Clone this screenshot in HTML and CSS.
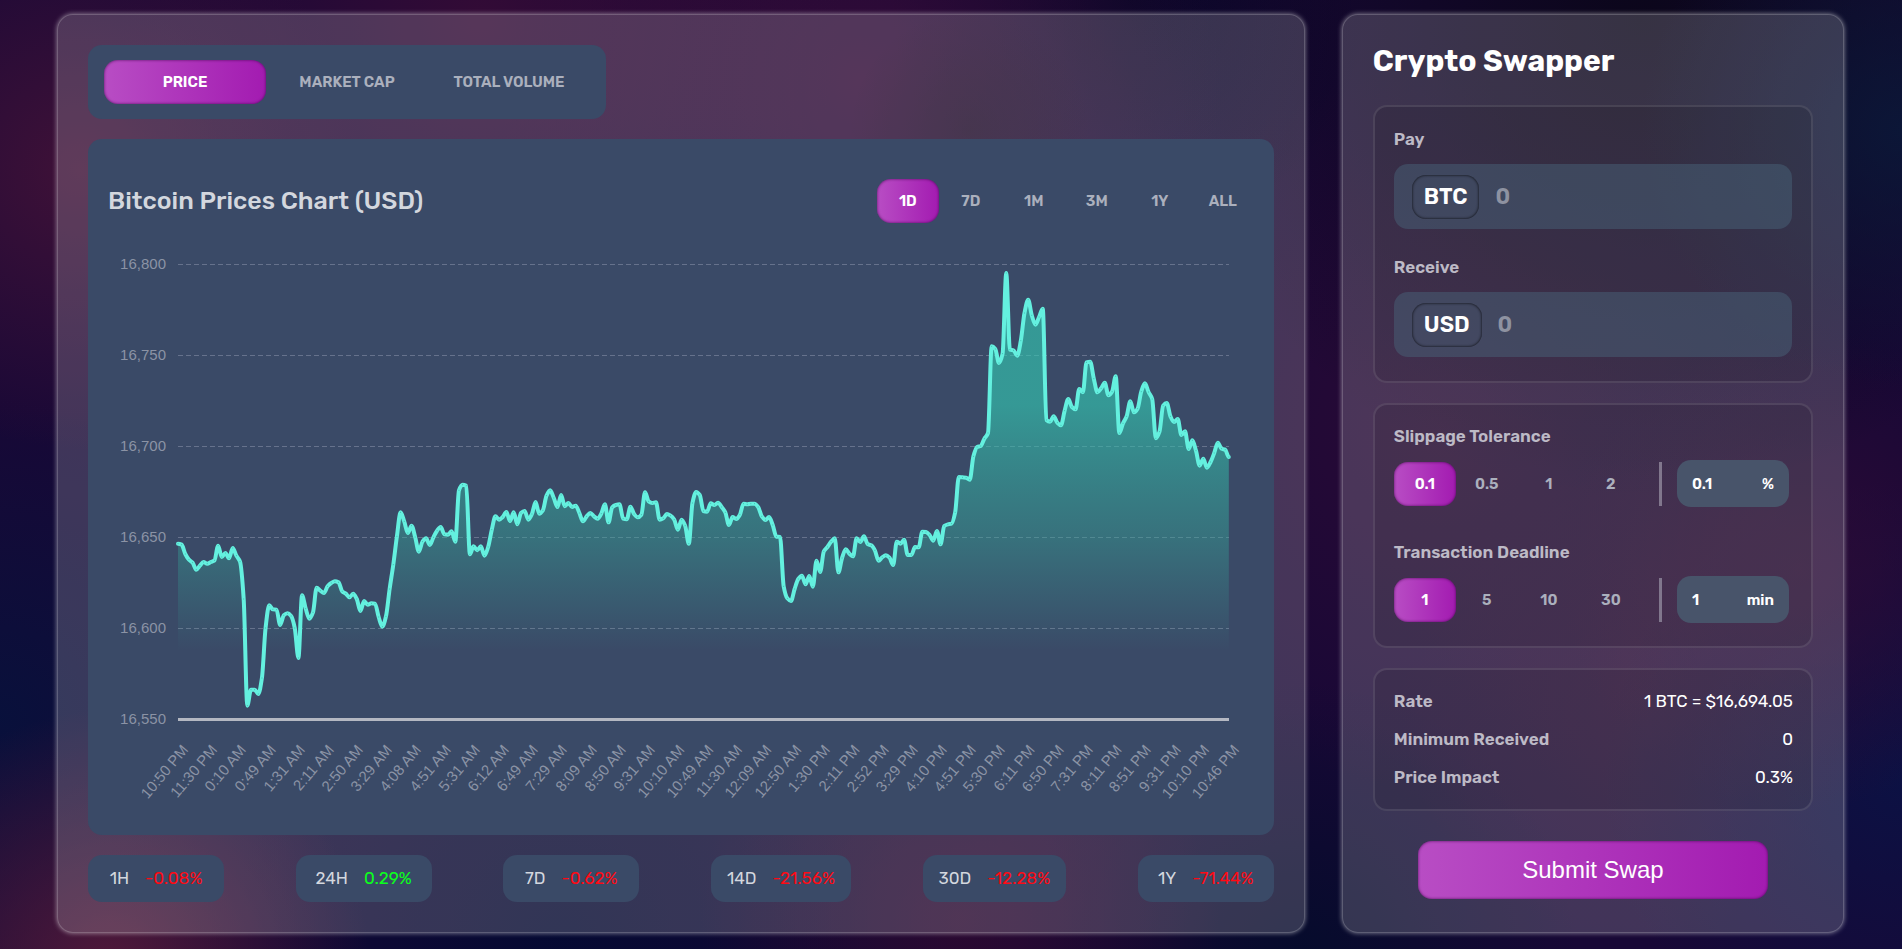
FILE: index.html
```
<!DOCTYPE html>
<html lang="en">
<head>
<meta charset="utf-8">
<title>Crypto Swapper</title>
<link rel="stylesheet" href="styles.css">
</head>
<body>
<main class="layout">
  <section class="panel market">
    <nav class="tabs" aria-label="Metric">
      <button class="btn tab active" type="button">PRICE</button>
      <button class="btn tab" type="button">MARKET CAP</button>
      <button class="btn tab" type="button">TOTAL VOLUME</button>
    </nav>

    <article class="chart">
      <header class="chart-head">
        <h2 class="chart-title">Bitcoin Prices Chart (USD)</h2>
        <div class="ranges">
          <button class="btn range active" type="button">1D</button>
          <button class="btn range" type="button">7D</button>
          <button class="btn range" type="button">1M</button>
          <button class="btn range" type="button">3M</button>
          <button class="btn range" type="button">1Y</button>
          <button class="btn range" type="button">ALL</button>
        </div>
      </header>
      <div class="chart-body">
        <div class="y-axis">
          <span>16,800</span><span>16,750</span><span>16,700</span><span>16,650</span><span>16,600</span><span>16,550</span>
        </div>
        <svg class="plot" viewBox="0 0 3154 1365" preserveAspectRatio="none" role="img" aria-label="Bitcoin price, last 24 hours">
          <defs>
            <linearGradient id="fade" gradientUnits="userSpaceOnUse" x1="0" y1="0" x2="0" y2="1365">
              <stop offset="0.31" stop-color="#32c9b2" stop-opacity="0.62"/>
              <stop offset="0.6" stop-color="#34a89a" stop-opacity="0.42"/>
              <stop offset="0.85" stop-color="#34a89a" stop-opacity="0"/>
            </linearGradient>
          </defs>
          <g class="grid">
            <path d="M0 0H3154M0 273H3154M0 546H3154M0 819H3154M0 1092H3154"/>
          </g>
          <path class="base" d="M0 1365H3154"/>
          <path class="area" id="area"/>
          <path class="line" id="line"/>
          <path class="dots" id="dots"/>
        </svg>
        <div class="x-axis" id="times"></div>
      </div>
    </article>

    <ul class="changes">
      <li class="change"><span>1H</span><span class="down">-0.08%</span></li>
      <li class="change"><span>24H</span><span class="up">0.29%</span></li>
      <li class="change"><span>7D</span><span class="down">-0.62%</span></li>
      <li class="change"><span>14D</span><span class="down">-21.56%</span></li>
      <li class="change"><span>30D</span><span class="down">-12.28%</span></li>
      <li class="change"><span>1Y</span><span class="down">-71.44%</span></li>
    </ul>
  </section>

  <form class="panel swap">
    <h1 class="swap-title">Crypto Swapper</h1>

    <div class="group">
      <div class="field">
        <label class="label" for="pay">Pay</label>
        <div class="amount">
          <button class="chip" type="button">BTC</button>
          <input class="amount-input" id="pay" type="text" placeholder="0">
        </div>
      </div>
      <div class="field">
        <label class="label" for="receive">Receive</label>
        <div class="amount">
          <button class="chip" type="button">USD</button>
          <input class="amount-input" id="receive" type="text" placeholder="0">
        </div>
      </div>
    </div>

    <div class="group options">
      <div class="option">
        <label class="label" for="slippage">Slippage Tolerance</label>
        <div class="option-row">
          <button class="btn range active" type="button">0.1</button>
          <button class="btn range" type="button">0.5</button>
          <button class="btn range" type="button">1</button>
          <button class="btn range" type="button">2</button>
          <span class="divider"></span>
          <div class="custom"><input class="custom-input" id="slippage" type="text" value="0.1"><span>%</span></div>
        </div>
      </div>
      <div class="option">
        <label class="label" for="deadline">Transaction Deadline</label>
        <div class="option-row">
          <button class="btn range active" type="button">1</button>
          <button class="btn range" type="button">5</button>
          <button class="btn range" type="button">10</button>
          <button class="btn range" type="button">30</button>
          <span class="divider"></span>
          <div class="custom"><input class="custom-input" id="deadline" type="text" value="1"><span>min</span></div>
        </div>
      </div>
    </div>

    <dl class="group summary">
      <div class="summary-row"><dt>Rate</dt><dd>1 BTC = $16,694.05</dd></div>
      <div class="summary-row"><dt>Minimum Received</dt><dd>0</dd></div>
      <div class="summary-row"><dt>Price Impact</dt><dd>0.3%</dd></div>
    </dl>

    <button class="submit" type="button">Submit Swap</button>
  </form>
</main>
<script src="chart.js"></script>
</body>
</html>
```
FILE: styles.css
```
* {
  box-sizing: border-box;
}

body {
  margin: 0;
  min-height: 100vh;
  font-family: Rubik, Inter, sans-serif;
  color: #fff;
  background:
    radial-gradient(circle 280px at 80px 170px, rgba(76, 20, 56, 0.75), transparent),
    radial-gradient(circle 260px at 110px 970px, rgba(84, 26, 58, 0.95), transparent),
    radial-gradient(circle 360px at 480px 20px, rgba(62, 12, 54, 0.7), transparent),
    radial-gradient(circle 120px at 970px 130px, rgba(24, 10, 32, 0.55), transparent),
    radial-gradient(circle 360px at 860px 80px, rgba(60, 12, 56, 0.7), transparent),
    radial-gradient(circle 260px at 960px 920px, rgba(50, 10, 48, 0.75), transparent),
    radial-gradient(circle 460px at 560px 940px, rgba(2, 10, 50, 0.85), transparent),
    radial-gradient(circle 320px at 0 720px, rgba(2, 20, 62, 0.7), transparent),
    radial-gradient(circle 260px at 1902px 130px, rgba(10, 26, 58, 0.8), transparent),
    radial-gradient(circle 480px at 1640px 20px, rgba(10, 6, 24, 0.9), transparent),
    radial-gradient(circle 240px at 1800px 570px, rgba(52, 12, 54, 0.7), transparent),
    radial-gradient(circle 300px at 1902px 780px, rgba(8, 20, 72, 0.75), transparent),
    radial-gradient(circle 360px at 1440px 430px, rgba(46, 10, 54, 0.75), transparent),
    radial-gradient(circle 240px at 1640px 700px, rgba(48, 10, 52, 0.6), transparent),
    radial-gradient(circle 280px at 1300px 960px, rgba(2, 12, 42, 0.85), transparent),
    radial-gradient(circle 240px at 1130px 0, rgba(6, 6, 36, 0.8), transparent),
    #180836;
}

button,
input {
  font: inherit;
  color: inherit;
  border: 0;
  background: none;
}

.layout {
  display: grid;
  grid-template-columns: minmax(0, 82fr) minmax(0, 33fr);
  gap: 37px;
  padding: 14px 58px 16px 57px;
}

.panel {
  display: flex;
  flex-direction: column;
  padding: 30px;
  border: 1px solid rgba(255, 255, 255, 0.2);
  border-radius: 16px;
  background: rgba(230, 230, 230, 0.2);
  box-shadow: 0 0 5px rgba(255, 255, 255, 0.5);
}

.market {
  gap: 20px;
}

.tabs {
  display: flex;
  align-self: flex-start;
  padding: 15px 16px;
  border-radius: 14px;
  background: #3a4a67;
}

.btn {
  height: 44px;
  padding: 0;
  border-radius: 14px;
  font-size: 15px;
  font-weight: 600;
  color: #abb0bd;
  cursor: pointer;
}

.tab {
  width: 162px;
}

.range {
  width: 62px;
}

.active,
.submit {
  color: #fff;
  background: linear-gradient(90deg, #b84dc4, #a31bb1);
  box-shadow: inset 0 0 3px rgba(60, 0, 70, 0.8);
}

.chart {
  padding: 40px 20px 0 20px;
  border-radius: 14px;
  background: #3a4a67;
}

.chart-head {
  display: flex;
  align-items: center;
  justify-content: space-between;
}

.chart-title {
  margin: 0;
  font-size: 25px;
  font-weight: 500;
  line-height: 28px;
  color: #d3d7de;
}

.ranges {
  display: flex;
  gap: 1px;
}

.chart-body {
  display: grid;
  grid-template-columns: 58px 1fr;
  grid-template-rows: 455px 116px;
  column-gap: 12px;
  margin-top: 41px;
  padding-right: 25px;
  font-family: "Liberation Sans", Arial, sans-serif;
  font-size: 15px;
  color: #8b93a5;
}

.y-axis {
  display: flex;
  flex-direction: column;
  justify-content: space-between;
  align-items: flex-end;
}

.y-axis span {
  height: 0;
  line-height: 0;
}

.plot {
  display: block;
  width: 100%;
  height: 100%;
  overflow: visible;
}

.plot path {
  vector-effect: non-scaling-stroke;
}

.grid path {
  fill: none;
  stroke: #66728c;
  stroke-width: 1;
  stroke-dasharray: 5 3;
  shape-rendering: crispEdges;
}

.base {
  stroke: #b4b8c2;
  stroke-width: 3;
  shape-rendering: crispEdges;
}

.area {
  fill: url(#fade);
}

.line {
  fill: none;
  stroke: #64f0df;
  stroke-width: 4;
  stroke-linejoin: round;
  stroke-linecap: round;
}

.dots {
  fill: none;
  stroke: #3fb5aa;
  stroke-width: 1;
  stroke-linecap: round;
}

.x-axis {
  grid-column: 2;
  display: flex;
  justify-content: space-between;
  padding-top: 19px;
  line-height: 18px;
}

.tick {
  display: flex;
  justify-content: flex-end;
  width: 0;
  white-space: nowrap;
}

.tick span {
  flex: none;
  height: 18px;
  margin-right: -7px;
  transform: rotate(-50deg);
  transform-origin: right center;
}

.changes {
  display: flex;
  justify-content: space-between;
  margin: 0;
  padding: 0;
  list-style: none;
}

.change {
  display: flex;
  justify-content: center;
  gap: 16px;
  min-width: 136px;
  padding: 0 16px;
  border-radius: 14px;
  background: #3a4a67;
  font-size: 17px;
  line-height: 47px;
  color: #d3d7de;
}

.down {
  color: #ff0a14;
}

.up {
  color: #0cff1c;
}

.swap-title {
  margin: 0 0 28px;
  font-size: 30px;
  font-weight: 700;
  line-height: 32px;
}

.group {
  margin: 0 0 20px;
  padding: 20px 19px 19px;
  border: 2px solid rgba(255, 255, 255, 0.1);
  border-radius: 14px;
  background: rgba(0, 0, 0, 0.1);
}

.label {
  display: block;
  font-size: 17px;
  font-weight: 600;
  line-height: 24px;
  color: #bdbac6;
}

.field + .field {
  margin-top: 26px;
}

.field:last-child {
  margin-bottom: 5px;
}

.amount {
  display: flex;
  align-items: center;
  gap: 16px;
  height: 65px;
  margin-top: 13px;
  padding: 0 18px;
  border-radius: 14px;
  background: rgba(72, 98, 120, 0.5);
}

.chip {
  height: 44px;
  padding: 0 12px;
  border-radius: 14px;
  font-size: 22px;
  font-weight: 600;
  box-shadow: inset 0 0 3px rgba(0, 0, 0, 0.9);
}

.amount-input {
  flex: 1;
  min-width: 0;
  padding: 0;
  font-size: 22px;
  font-weight: 600;
}

.amount-input::placeholder {
  color: #8e92a1;
}

.options {
  padding-top: 19px;
  padding-bottom: 23px;
}

.option + .option {
  margin-top: 33px;
}

.option-row {
  display: flex;
  align-items: center;
  height: 47px;
  margin-top: 12px;
}

.divider {
  width: 3px;
  height: 44px;
  margin: 0 15px 0 auto;
  background: #81778d;
}

.custom {
  display: flex;
  align-items: center;
  justify-content: space-between;
  width: 112px;
  height: 47px;
  margin-right: 3px;
  padding: 0 15px;
  border-radius: 14px;
  background: #48546a;
  font-size: 15px;
  font-weight: 600;
}

.custom-input {
  width: 40px;
  padding: 0;
}

.summary {
  margin-bottom: 30px;
  padding: 12px 18px 13px 19px;
  font-size: 17px;
  line-height: 38px;
}

.summary-row {
  display: flex;
  justify-content: space-between;
}

.summary dt {
  font-weight: 600;
  color: #bdbac6;
}

.summary dd {
  margin: 0;
}

.submit {
  align-self: center;
  width: 350px;
  max-width: 100%;
  height: 58px;
  border-radius: 14px;
  font-family: "Liberation Sans", Arial, sans-serif;
  font-size: 24px;
}
```
FILE: chart.js
```
// Five-minute samples. Each series is measured down from its own offset
// on a scale where 273 units equal $50 and 0 is $16,800.
const series = [
  { offset: 587, values: [
    252, 255, 283, 300, 309, 330, 318, 307, 312, 307, 302, 258, 292, 280, 296, 265, 288, 306, 418, 738,
    690, 690, 703, 655, 505, 437, 449, 450, 496, 467, 461, 469, 505, 595, 407, 447, 477, 458, 384, 393,
    400, 380, 370, 365, 368, 395, 402, 413, 402, 418, 454, 424, 435, 431, 432, 472, 501, 470, 388, 315,
    230, 158, 185, 220, 198, 232, 276, 246, 236, 256, 233, 213, 202, 224, 225, 215, 246, 92, 75, 78,
    284, 260, 272, 260, 288, 262, 210, 170, 180, 172, 157, 184, 158, 194, 160, 154, 180, 163, 127, 162,
    152, 108, 92, 115, 142, 106, 140, 130, 142, 138, 160, 185, 170, 160, 170, 177, 162, 134, 188, 143,
    136, 134, 177, 179, 141, 163, 173, 165, 98, 125, 130, 128, 180, 176, 163, 168, 180, 210, 180, 198,
    252, 130, 97, 106, 154, 156, 131, 136, 129, 142, 158, 196, 172, 178, 165, 132, 134, 132, 132, 142,
    170, 181, 172, 196, 231, 232, 380, 416, 424, 388, 358, 348, 374, 349, 381, 303, 337, 275, 262, 246,
    236, 338, 295, 269, 282, 290, 236, 247, 230, 253, 257, 272, 303, 293, 287, 294, 316, 246, 252, 240,
    286, 286, 262, 263, 216, 217, 226, 243, 214, 254, 199, 194, 192, 158, 52, 53, 54, 60
  ] },
  { offset: -13, values: [
    590, 562, 559, 537, 520, 260, 268, 310, 282, 40, 270, 272, 288, 243, 160, 120, 167, 195, 172, 147,
    481, 486, 470, 489, 497, 453, 418, 442, 449, 388, 398, 308, 306, 357, 398, 386, 369, 407, 396, 350,
    520, 491, 470, 425, 458, 447, 396, 371, 397, 418, 536, 516, 438, 430, 470, 487, 478, 526, 515, 568,
    542, 573, 618, 597, 624, 607, 580, 549, 567, 570, 592
  ] }
];

const ys = series.flatMap(s => s.values.map(v => v + s.offset));
const step = 3154 / (ys.length - 1);

// Monotone cubic tangents keep the curve from overshooting its samples.
const slopes = ys.slice(1).map((y, i) => y - ys[i]);
const tangents = ys.map((y, i) => {
  const a = slopes[i - 1];
  const b = slopes[i];
  if (a === undefined || b === undefined) return 0;
  return a * b <= 0 ? 0 : 2 * a * b / (a + b);
});

let d = `M0 ${ys[0]}`;
let dots = '';
ys.forEach((y, i) => {
  const x = i * step;
  dots += `M${x} ${y}h0.1`;
  if (i === 0) return;
  const p = x - step;
  d += `C${p + step / 3} ${ys[i - 1] + tangents[i - 1] / 3} ${x - step / 3} ${y - tangents[i] / 3} ${x} ${y}`;
});

document.getElementById('line').setAttribute('d', d);
document.getElementById('area').setAttribute('d', `${d}V1365H0Z`);
document.getElementById('dots').setAttribute('d', dots);

const times = ['10:50 PM', '11:30 PM', '0:10 AM', '0:49 AM', '1:31 AM', '2:11 AM', '2:50 AM', '3:29 AM',
  '4:08 AM', '4:51 AM', '5:31 AM', '6:12 AM', '6:49 AM', '7:29 AM', '8:09 AM', '8:50 AM', '9:31 AM',
  '10:10 AM', '10:49 AM', '11:30 AM', '12:09 AM', '12:50 AM', '1:30 PM', '2:11 PM', '2:52 PM', '3:29 PM',
  '4:10 PM', '4:51 PM', '5:30 PM', '6:11 PM', '6:50 PM', '7:31 PM', '8:11 PM', '8:51 PM', '9:31 PM',
  '10:10 PM', '10:46 PM'];
const axis = document.getElementById('times');
for (const time of times) {
  const tick = document.createElement('div');
  tick.className = 'tick';
  const text = document.createElement('span');
  text.textContent = time;
  tick.append(text);
  axis.append(tick);
}
```
